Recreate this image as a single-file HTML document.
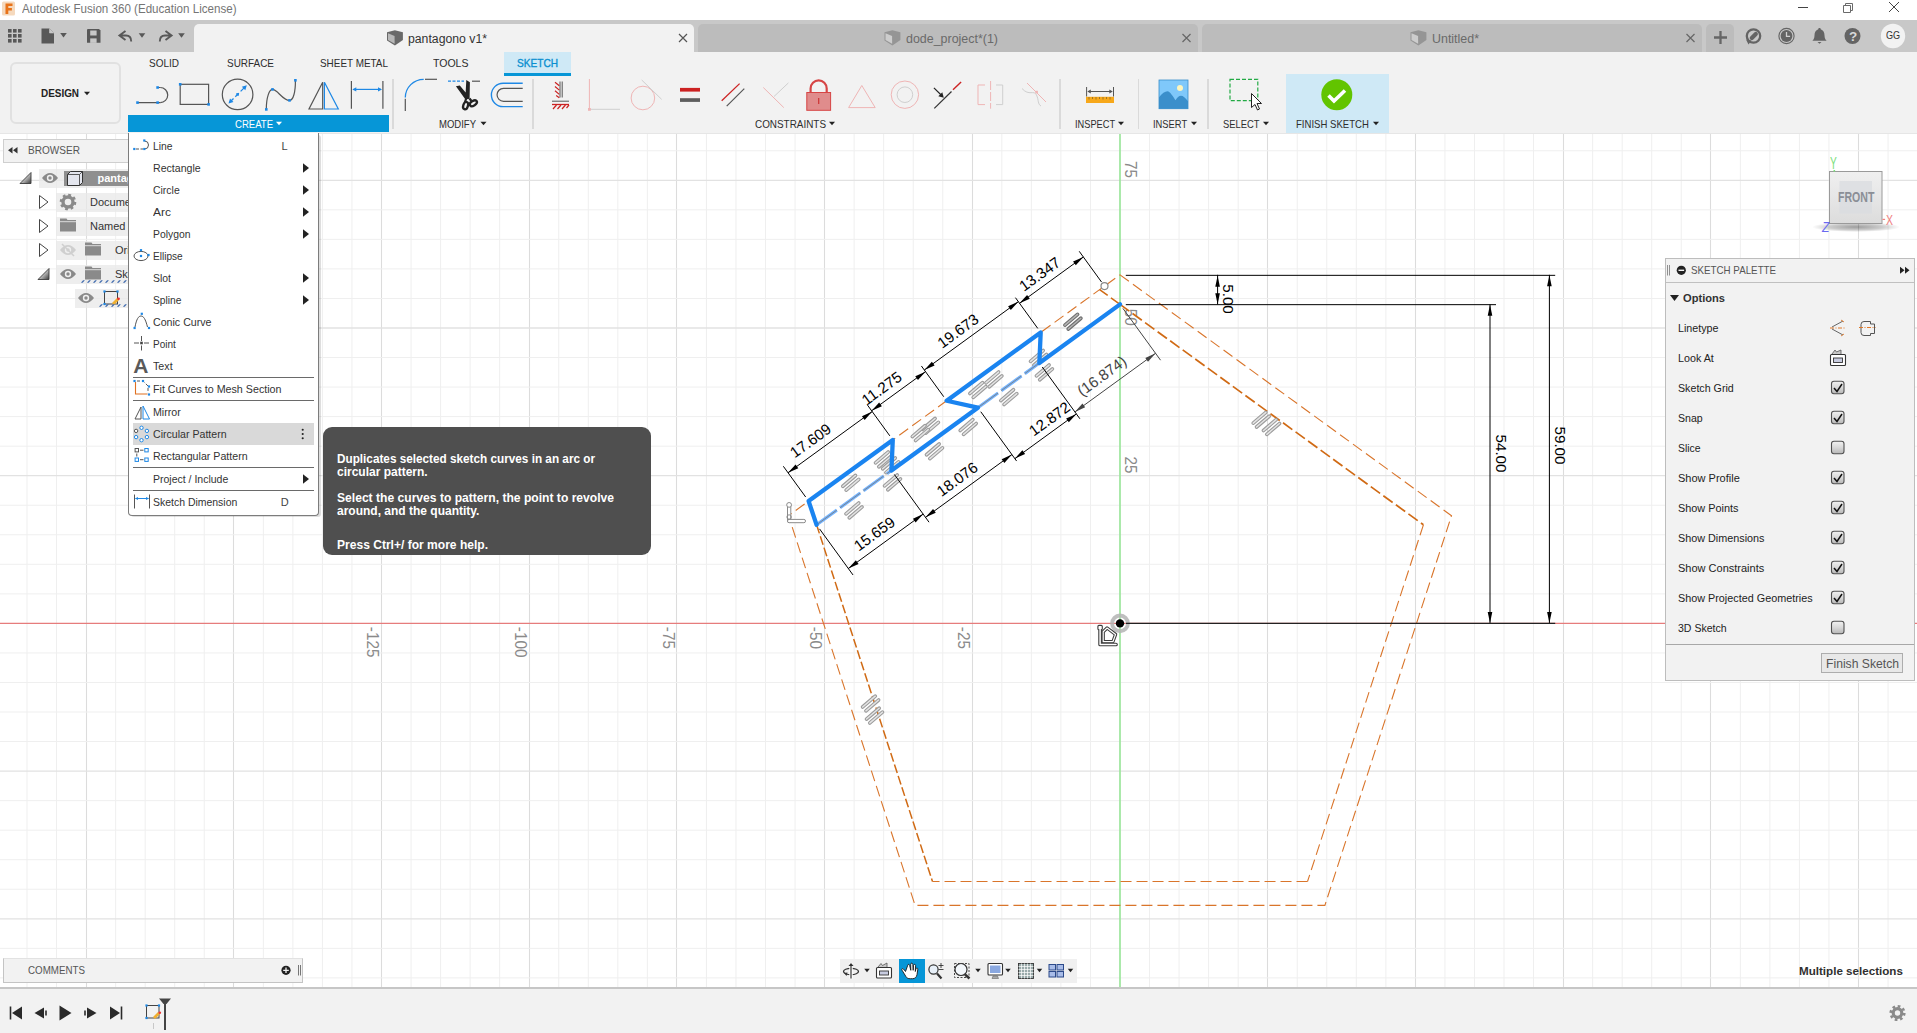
<!DOCTYPE html>
<html lang="en"><head><meta charset="utf-8"><title>Autodesk Fusion 360 (Education License)</title>
<style>
html,body{margin:0;padding:0}
body{width:1917px;height:1033px;position:relative;overflow:hidden;background:#fff;font-family:"Liberation Sans",sans-serif}
.b{position:absolute;display:block}
.t{position:absolute;white-space:nowrap;line-height:1;font-family:"Liberation Sans",sans-serif}
</style></head>
<body>
<!-- canvas -->
<svg class="b" style="left:0;top:0" width="1917" height="1033" viewBox="0 0 1917 1033" font-family="Liberation Sans, sans-serif"><rect x="0" y="133" width="1917" height="855" fill="#fff"/><line x1="27.02" y1="133.00" x2="27.02" y2="988.00" stroke="#efefef" stroke-width="1" /><line x1="56.56" y1="133.00" x2="56.56" y2="988.00" stroke="#efefef" stroke-width="1" /><line x1="86.50" y1="133.00" x2="86.50" y2="988.00" stroke="#dcdcdc" stroke-width="1.1" /><line x1="115.64" y1="133.00" x2="115.64" y2="988.00" stroke="#efefef" stroke-width="1" /><line x1="145.18" y1="133.00" x2="145.18" y2="988.00" stroke="#efefef" stroke-width="1" /><line x1="174.72" y1="133.00" x2="174.72" y2="988.00" stroke="#efefef" stroke-width="1" /><line x1="204.26" y1="133.00" x2="204.26" y2="988.00" stroke="#efefef" stroke-width="1" /><line x1="233.50" y1="133.00" x2="233.50" y2="988.00" stroke="#dcdcdc" stroke-width="1.1" /><line x1="263.34" y1="133.00" x2="263.34" y2="988.00" stroke="#efefef" stroke-width="1" /><line x1="292.88" y1="133.00" x2="292.88" y2="988.00" stroke="#efefef" stroke-width="1" /><line x1="322.42" y1="133.00" x2="322.42" y2="988.00" stroke="#efefef" stroke-width="1" /><line x1="351.96" y1="133.00" x2="351.96" y2="988.00" stroke="#efefef" stroke-width="1" /><line x1="381.50" y1="133.00" x2="381.50" y2="988.00" stroke="#dcdcdc" stroke-width="1.1" /><line x1="411.04" y1="133.00" x2="411.04" y2="988.00" stroke="#efefef" stroke-width="1" /><line x1="440.58" y1="133.00" x2="440.58" y2="988.00" stroke="#efefef" stroke-width="1" /><line x1="470.12" y1="133.00" x2="470.12" y2="988.00" stroke="#efefef" stroke-width="1" /><line x1="499.66" y1="133.00" x2="499.66" y2="988.00" stroke="#efefef" stroke-width="1" /><line x1="529.50" y1="133.00" x2="529.50" y2="988.00" stroke="#dcdcdc" stroke-width="1.1" /><line x1="558.74" y1="133.00" x2="558.74" y2="988.00" stroke="#efefef" stroke-width="1" /><line x1="588.28" y1="133.00" x2="588.28" y2="988.00" stroke="#efefef" stroke-width="1" /><line x1="617.82" y1="133.00" x2="617.82" y2="988.00" stroke="#efefef" stroke-width="1" /><line x1="647.36" y1="133.00" x2="647.36" y2="988.00" stroke="#efefef" stroke-width="1" /><line x1="676.50" y1="133.00" x2="676.50" y2="988.00" stroke="#dcdcdc" stroke-width="1.1" /><line x1="706.44" y1="133.00" x2="706.44" y2="988.00" stroke="#efefef" stroke-width="1" /><line x1="735.98" y1="133.00" x2="735.98" y2="988.00" stroke="#efefef" stroke-width="1" /><line x1="765.52" y1="133.00" x2="765.52" y2="988.00" stroke="#efefef" stroke-width="1" /><line x1="795.06" y1="133.00" x2="795.06" y2="988.00" stroke="#efefef" stroke-width="1" /><line x1="824.50" y1="133.00" x2="824.50" y2="988.00" stroke="#dcdcdc" stroke-width="1.1" /><line x1="854.14" y1="133.00" x2="854.14" y2="988.00" stroke="#efefef" stroke-width="1" /><line x1="883.68" y1="133.00" x2="883.68" y2="988.00" stroke="#efefef" stroke-width="1" /><line x1="913.22" y1="133.00" x2="913.22" y2="988.00" stroke="#efefef" stroke-width="1" /><line x1="942.76" y1="133.00" x2="942.76" y2="988.00" stroke="#efefef" stroke-width="1" /><line x1="972.50" y1="133.00" x2="972.50" y2="988.00" stroke="#dcdcdc" stroke-width="1.1" /><line x1="1001.84" y1="133.00" x2="1001.84" y2="988.00" stroke="#efefef" stroke-width="1" /><line x1="1031.38" y1="133.00" x2="1031.38" y2="988.00" stroke="#efefef" stroke-width="1" /><line x1="1060.92" y1="133.00" x2="1060.92" y2="988.00" stroke="#efefef" stroke-width="1" /><line x1="1090.46" y1="133.00" x2="1090.46" y2="988.00" stroke="#efefef" stroke-width="1" /><line x1="1149.54" y1="133.00" x2="1149.54" y2="988.00" stroke="#efefef" stroke-width="1" /><line x1="1179.08" y1="133.00" x2="1179.08" y2="988.00" stroke="#efefef" stroke-width="1" /><line x1="1208.62" y1="133.00" x2="1208.62" y2="988.00" stroke="#efefef" stroke-width="1" /><line x1="1238.16" y1="133.00" x2="1238.16" y2="988.00" stroke="#efefef" stroke-width="1" /><line x1="1267.50" y1="133.00" x2="1267.50" y2="988.00" stroke="#dcdcdc" stroke-width="1.1" /><line x1="1297.24" y1="133.00" x2="1297.24" y2="988.00" stroke="#efefef" stroke-width="1" /><line x1="1326.78" y1="133.00" x2="1326.78" y2="988.00" stroke="#efefef" stroke-width="1" /><line x1="1356.32" y1="133.00" x2="1356.32" y2="988.00" stroke="#efefef" stroke-width="1" /><line x1="1385.86" y1="133.00" x2="1385.86" y2="988.00" stroke="#efefef" stroke-width="1" /><line x1="1415.50" y1="133.00" x2="1415.50" y2="988.00" stroke="#dcdcdc" stroke-width="1.1" /><line x1="1444.94" y1="133.00" x2="1444.94" y2="988.00" stroke="#efefef" stroke-width="1" /><line x1="1474.48" y1="133.00" x2="1474.48" y2="988.00" stroke="#efefef" stroke-width="1" /><line x1="1504.02" y1="133.00" x2="1504.02" y2="988.00" stroke="#efefef" stroke-width="1" /><line x1="1533.56" y1="133.00" x2="1533.56" y2="988.00" stroke="#efefef" stroke-width="1" /><line x1="1563.50" y1="133.00" x2="1563.50" y2="988.00" stroke="#dcdcdc" stroke-width="1.1" /><line x1="1592.64" y1="133.00" x2="1592.64" y2="988.00" stroke="#efefef" stroke-width="1" /><line x1="1622.18" y1="133.00" x2="1622.18" y2="988.00" stroke="#efefef" stroke-width="1" /><line x1="1651.72" y1="133.00" x2="1651.72" y2="988.00" stroke="#efefef" stroke-width="1" /><line x1="1681.26" y1="133.00" x2="1681.26" y2="988.00" stroke="#efefef" stroke-width="1" /><line x1="1710.50" y1="133.00" x2="1710.50" y2="988.00" stroke="#dcdcdc" stroke-width="1.1" /><line x1="1740.34" y1="133.00" x2="1740.34" y2="988.00" stroke="#efefef" stroke-width="1" /><line x1="1769.88" y1="133.00" x2="1769.88" y2="988.00" stroke="#efefef" stroke-width="1" /><line x1="1799.42" y1="133.00" x2="1799.42" y2="988.00" stroke="#efefef" stroke-width="1" /><line x1="1828.96" y1="133.00" x2="1828.96" y2="988.00" stroke="#efefef" stroke-width="1" /><line x1="1858.50" y1="133.00" x2="1858.50" y2="988.00" stroke="#dcdcdc" stroke-width="1.1" /><line x1="1888.04" y1="133.00" x2="1888.04" y2="988.00" stroke="#efefef" stroke-width="1" /><line x1="0.00" y1="150.76" x2="1917.00" y2="150.76" stroke="#efefef" stroke-width="1" /><line x1="0.00" y1="180.30" x2="1917.00" y2="180.30" stroke="#e2e2e2" stroke-width="1.3" /><line x1="0.00" y1="209.84" x2="1917.00" y2="209.84" stroke="#efefef" stroke-width="1" /><line x1="0.00" y1="239.38" x2="1917.00" y2="239.38" stroke="#efefef" stroke-width="1" /><line x1="0.00" y1="268.92" x2="1917.00" y2="268.92" stroke="#efefef" stroke-width="1" /><line x1="0.00" y1="298.46" x2="1917.00" y2="298.46" stroke="#efefef" stroke-width="1" /><line x1="0.00" y1="328.00" x2="1917.00" y2="328.00" stroke="#e2e2e2" stroke-width="1.3" /><line x1="0.00" y1="357.54" x2="1917.00" y2="357.54" stroke="#efefef" stroke-width="1" /><line x1="0.00" y1="387.08" x2="1917.00" y2="387.08" stroke="#efefef" stroke-width="1" /><line x1="0.00" y1="416.62" x2="1917.00" y2="416.62" stroke="#efefef" stroke-width="1" /><line x1="0.00" y1="446.16" x2="1917.00" y2="446.16" stroke="#efefef" stroke-width="1" /><line x1="0.00" y1="475.70" x2="1917.00" y2="475.70" stroke="#e2e2e2" stroke-width="1.3" /><line x1="0.00" y1="505.24" x2="1917.00" y2="505.24" stroke="#efefef" stroke-width="1" /><line x1="0.00" y1="534.78" x2="1917.00" y2="534.78" stroke="#efefef" stroke-width="1" /><line x1="0.00" y1="564.32" x2="1917.00" y2="564.32" stroke="#efefef" stroke-width="1" /><line x1="0.00" y1="593.86" x2="1917.00" y2="593.86" stroke="#efefef" stroke-width="1" /><line x1="0.00" y1="652.94" x2="1917.00" y2="652.94" stroke="#efefef" stroke-width="1" /><line x1="0.00" y1="682.48" x2="1917.00" y2="682.48" stroke="#efefef" stroke-width="1" /><line x1="0.00" y1="712.02" x2="1917.00" y2="712.02" stroke="#efefef" stroke-width="1" /><line x1="0.00" y1="741.56" x2="1917.00" y2="741.56" stroke="#efefef" stroke-width="1" /><line x1="0.00" y1="771.10" x2="1917.00" y2="771.10" stroke="#e2e2e2" stroke-width="1.3" /><line x1="0.00" y1="800.64" x2="1917.00" y2="800.64" stroke="#efefef" stroke-width="1" /><line x1="0.00" y1="830.18" x2="1917.00" y2="830.18" stroke="#efefef" stroke-width="1" /><line x1="0.00" y1="859.72" x2="1917.00" y2="859.72" stroke="#efefef" stroke-width="1" /><line x1="0.00" y1="889.26" x2="1917.00" y2="889.26" stroke="#efefef" stroke-width="1" /><line x1="0.00" y1="918.80" x2="1917.00" y2="918.80" stroke="#e2e2e2" stroke-width="1.3" /><line x1="0.00" y1="948.34" x2="1917.00" y2="948.34" stroke="#efefef" stroke-width="1" /><line x1="0.00" y1="977.88" x2="1917.00" y2="977.88" stroke="#efefef" stroke-width="1" /><line x1="0.00" y1="623.40" x2="1917.00" y2="623.40" stroke="#e67c7c" stroke-width="1.2" /><line x1="1120.00" y1="133.00" x2="1120.00" y2="988.00" stroke="#9ce69c" stroke-width="1.7" /><text transform="translate(367.20 626.80) rotate(90) scale(0.9 1)" font-size="17" fill="#8a8a8a">-125</text><text transform="translate(514.90 626.80) rotate(90) scale(0.9 1)" font-size="17" fill="#8a8a8a">-100</text><text transform="translate(662.60 626.80) rotate(90) scale(0.9 1)" font-size="17" fill="#8a8a8a">-75</text><text transform="translate(810.30 626.80) rotate(90) scale(0.9 1)" font-size="17" fill="#8a8a8a">-50</text><text transform="translate(958.00 626.80) rotate(90) scale(0.9 1)" font-size="17" fill="#8a8a8a">-25</text><text transform="translate(1124.60 456.48) rotate(90) scale(0.9 1)" font-size="17" fill="#8a8a8a">25</text><text transform="translate(1124.60 308.78) rotate(90) scale(0.9 1)" font-size="17" fill="#8a8a8a">50</text><text transform="translate(1124.60 161.08) rotate(90) scale(0.9 1)" font-size="17" fill="#8a8a8a">75</text><polygon points="1120.00,274.83 1451.51,515.69 1324.89,905.40 915.11,905.40 788.49,515.69" fill="none" stroke="#d9752b" stroke-width="1.1" stroke-dasharray="11 5"/><line x1="1120.00" y1="304.37" x2="1423.42" y2="524.81" stroke="#d06a14" stroke-width="1.7" stroke-dasharray="11.5 4"/><line x1="1423.42" y1="524.81" x2="1307.52" y2="881.50" stroke="#d9752b" stroke-width="1.1" stroke-dasharray="11 5"/><line x1="1307.52" y1="881.50" x2="932.48" y2="881.50" stroke="#d9752b" stroke-width="1.1" stroke-dasharray="11 5"/><line x1="816.58" y1="524.81" x2="932.48" y2="881.50" stroke="#d06a14" stroke-width="1.5" stroke-dasharray="9 3"/><line x1="1099.61" y1="289.55" x2="1120.00" y2="304.37" stroke="#d06a14" stroke-width="1.5" stroke-dasharray="10 4"/><line x1="1064.93" y1="325.15" x2="1077.56" y2="314.37" stroke="#6e6e6e" stroke-width="3.700" stroke-linecap="round"/><line x1="1064.93" y1="325.15" x2="1077.56" y2="314.37" stroke="#b4b4b4" stroke-width="1.500" stroke-linecap="round"/><line x1="1068.24" y1="329.03" x2="1080.87" y2="318.25" stroke="#6e6e6e" stroke-width="3.700" stroke-linecap="round"/><line x1="1068.24" y1="329.03" x2="1080.87" y2="318.25" stroke="#b4b4b4" stroke-width="1.500" stroke-linecap="round"/><line x1="1030.53" y1="361.35" x2="1043.16" y2="350.57" stroke="#9c9c9c" stroke-width="3.700" stroke-linecap="round"/><line x1="1030.53" y1="361.35" x2="1043.16" y2="350.57" stroke="#e4e4e4" stroke-width="1.500" stroke-linecap="round"/><line x1="1033.84" y1="365.23" x2="1046.47" y2="354.45" stroke="#9c9c9c" stroke-width="3.700" stroke-linecap="round"/><line x1="1033.84" y1="365.23" x2="1046.47" y2="354.45" stroke="#e4e4e4" stroke-width="1.500" stroke-linecap="round"/><line x1="1036.43" y1="375.85" x2="1049.06" y2="365.07" stroke="#9c9c9c" stroke-width="3.700" stroke-linecap="round"/><line x1="1036.43" y1="375.85" x2="1049.06" y2="365.07" stroke="#e4e4e4" stroke-width="1.500" stroke-linecap="round"/><line x1="1039.74" y1="379.73" x2="1052.37" y2="368.95" stroke="#9c9c9c" stroke-width="3.700" stroke-linecap="round"/><line x1="1039.74" y1="379.73" x2="1052.37" y2="368.95" stroke="#e4e4e4" stroke-width="1.500" stroke-linecap="round"/><line x1="985.93" y1="382.85" x2="998.56" y2="372.07" stroke="#9c9c9c" stroke-width="3.700" stroke-linecap="round"/><line x1="985.93" y1="382.85" x2="998.56" y2="372.07" stroke="#e4e4e4" stroke-width="1.500" stroke-linecap="round"/><line x1="989.24" y1="386.73" x2="1001.87" y2="375.95" stroke="#9c9c9c" stroke-width="3.700" stroke-linecap="round"/><line x1="989.24" y1="386.73" x2="1001.87" y2="375.95" stroke="#e4e4e4" stroke-width="1.500" stroke-linecap="round"/><line x1="969.93" y1="393.45" x2="982.56" y2="382.67" stroke="#9c9c9c" stroke-width="3.700" stroke-linecap="round"/><line x1="969.93" y1="393.45" x2="982.56" y2="382.67" stroke="#e4e4e4" stroke-width="1.500" stroke-linecap="round"/><line x1="973.24" y1="397.33" x2="985.87" y2="386.55" stroke="#9c9c9c" stroke-width="3.700" stroke-linecap="round"/><line x1="973.24" y1="397.33" x2="985.87" y2="386.55" stroke="#e4e4e4" stroke-width="1.500" stroke-linecap="round"/><line x1="1000.83" y1="400.55" x2="1013.46" y2="389.77" stroke="#9c9c9c" stroke-width="3.700" stroke-linecap="round"/><line x1="1000.83" y1="400.55" x2="1013.46" y2="389.77" stroke="#e4e4e4" stroke-width="1.500" stroke-linecap="round"/><line x1="1004.14" y1="404.43" x2="1016.77" y2="393.65" stroke="#9c9c9c" stroke-width="3.700" stroke-linecap="round"/><line x1="1004.14" y1="404.43" x2="1016.77" y2="393.65" stroke="#e4e4e4" stroke-width="1.500" stroke-linecap="round"/><line x1="960.23" y1="430.45" x2="972.86" y2="419.67" stroke="#9c9c9c" stroke-width="3.700" stroke-linecap="round"/><line x1="960.23" y1="430.45" x2="972.86" y2="419.67" stroke="#e4e4e4" stroke-width="1.500" stroke-linecap="round"/><line x1="963.54" y1="434.33" x2="976.17" y2="423.55" stroke="#9c9c9c" stroke-width="3.700" stroke-linecap="round"/><line x1="963.54" y1="434.33" x2="976.17" y2="423.55" stroke="#e4e4e4" stroke-width="1.500" stroke-linecap="round"/><line x1="922.43" y1="429.25" x2="935.06" y2="418.47" stroke="#9c9c9c" stroke-width="3.700" stroke-linecap="round"/><line x1="922.43" y1="429.25" x2="935.06" y2="418.47" stroke="#e4e4e4" stroke-width="1.500" stroke-linecap="round"/><line x1="925.74" y1="433.13" x2="938.37" y2="422.35" stroke="#9c9c9c" stroke-width="3.700" stroke-linecap="round"/><line x1="925.74" y1="433.13" x2="938.37" y2="422.35" stroke="#e4e4e4" stroke-width="1.500" stroke-linecap="round"/><line x1="912.33" y1="436.55" x2="924.96" y2="425.77" stroke="#9c9c9c" stroke-width="3.700" stroke-linecap="round"/><line x1="912.33" y1="436.55" x2="924.96" y2="425.77" stroke="#e4e4e4" stroke-width="1.500" stroke-linecap="round"/><line x1="915.64" y1="440.43" x2="928.27" y2="429.65" stroke="#9c9c9c" stroke-width="3.700" stroke-linecap="round"/><line x1="915.64" y1="440.43" x2="928.27" y2="429.65" stroke="#e4e4e4" stroke-width="1.500" stroke-linecap="round"/><line x1="926.53" y1="454.75" x2="939.16" y2="443.97" stroke="#9c9c9c" stroke-width="3.700" stroke-linecap="round"/><line x1="926.53" y1="454.75" x2="939.16" y2="443.97" stroke="#e4e4e4" stroke-width="1.500" stroke-linecap="round"/><line x1="929.84" y1="458.63" x2="942.47" y2="447.85" stroke="#9c9c9c" stroke-width="3.700" stroke-linecap="round"/><line x1="929.84" y1="458.63" x2="942.47" y2="447.85" stroke="#e4e4e4" stroke-width="1.500" stroke-linecap="round"/><line x1="875.53" y1="462.85" x2="888.16" y2="452.07" stroke="#9c9c9c" stroke-width="3.700" stroke-linecap="round"/><line x1="875.53" y1="462.85" x2="888.16" y2="452.07" stroke="#e4e4e4" stroke-width="1.500" stroke-linecap="round"/><line x1="878.84" y1="466.73" x2="891.47" y2="455.95" stroke="#9c9c9c" stroke-width="3.700" stroke-linecap="round"/><line x1="878.84" y1="466.73" x2="891.47" y2="455.95" stroke="#e4e4e4" stroke-width="1.500" stroke-linecap="round"/><line x1="882.63" y1="468.75" x2="895.26" y2="457.97" stroke="#9c9c9c" stroke-width="3.700" stroke-linecap="round"/><line x1="882.63" y1="468.75" x2="895.26" y2="457.97" stroke="#e4e4e4" stroke-width="1.500" stroke-linecap="round"/><line x1="885.94" y1="472.63" x2="898.57" y2="461.85" stroke="#9c9c9c" stroke-width="3.700" stroke-linecap="round"/><line x1="885.94" y1="472.63" x2="898.57" y2="461.85" stroke="#e4e4e4" stroke-width="1.500" stroke-linecap="round"/><line x1="884.53" y1="485.85" x2="897.16" y2="475.07" stroke="#9c9c9c" stroke-width="3.700" stroke-linecap="round"/><line x1="884.53" y1="485.85" x2="897.16" y2="475.07" stroke="#e4e4e4" stroke-width="1.500" stroke-linecap="round"/><line x1="887.84" y1="489.73" x2="900.47" y2="478.95" stroke="#9c9c9c" stroke-width="3.700" stroke-linecap="round"/><line x1="887.84" y1="489.73" x2="900.47" y2="478.95" stroke="#e4e4e4" stroke-width="1.500" stroke-linecap="round"/><line x1="842.83" y1="486.25" x2="855.46" y2="475.47" stroke="#9c9c9c" stroke-width="3.700" stroke-linecap="round"/><line x1="842.83" y1="486.25" x2="855.46" y2="475.47" stroke="#e4e4e4" stroke-width="1.500" stroke-linecap="round"/><line x1="846.14" y1="490.13" x2="858.77" y2="479.35" stroke="#9c9c9c" stroke-width="3.700" stroke-linecap="round"/><line x1="846.14" y1="490.13" x2="858.77" y2="479.35" stroke="#e4e4e4" stroke-width="1.500" stroke-linecap="round"/><line x1="846.03" y1="513.85" x2="858.66" y2="503.07" stroke="#9c9c9c" stroke-width="3.700" stroke-linecap="round"/><line x1="846.03" y1="513.85" x2="858.66" y2="503.07" stroke="#e4e4e4" stroke-width="1.500" stroke-linecap="round"/><line x1="849.34" y1="517.73" x2="861.97" y2="506.95" stroke="#9c9c9c" stroke-width="3.700" stroke-linecap="round"/><line x1="849.34" y1="517.73" x2="861.97" y2="506.95" stroke="#e4e4e4" stroke-width="1.500" stroke-linecap="round"/><line x1="862.63" y1="706.95" x2="875.26" y2="696.17" stroke="#9c9c9c" stroke-width="3.700" stroke-linecap="round"/><line x1="862.63" y1="706.95" x2="875.26" y2="696.17" stroke="#e4e4e4" stroke-width="1.500" stroke-linecap="round"/><line x1="865.94" y1="710.83" x2="878.57" y2="700.05" stroke="#9c9c9c" stroke-width="3.700" stroke-linecap="round"/><line x1="865.94" y1="710.83" x2="878.57" y2="700.05" stroke="#e4e4e4" stroke-width="1.500" stroke-linecap="round"/><line x1="866.53" y1="719.05" x2="879.16" y2="708.27" stroke="#9c9c9c" stroke-width="3.700" stroke-linecap="round"/><line x1="866.53" y1="719.05" x2="879.16" y2="708.27" stroke="#e4e4e4" stroke-width="1.500" stroke-linecap="round"/><line x1="869.84" y1="722.93" x2="882.47" y2="712.15" stroke="#9c9c9c" stroke-width="3.700" stroke-linecap="round"/><line x1="869.84" y1="722.93" x2="882.47" y2="712.15" stroke="#e4e4e4" stroke-width="1.500" stroke-linecap="round"/><line x1="1253.23" y1="423.15" x2="1265.86" y2="412.37" stroke="#9c9c9c" stroke-width="3.700" stroke-linecap="round"/><line x1="1253.23" y1="423.15" x2="1265.86" y2="412.37" stroke="#e4e4e4" stroke-width="1.500" stroke-linecap="round"/><line x1="1256.54" y1="427.03" x2="1269.17" y2="416.25" stroke="#9c9c9c" stroke-width="3.700" stroke-linecap="round"/><line x1="1256.54" y1="427.03" x2="1269.17" y2="416.25" stroke="#e4e4e4" stroke-width="1.500" stroke-linecap="round"/><line x1="1263.53" y1="430.45" x2="1276.16" y2="419.67" stroke="#9c9c9c" stroke-width="3.700" stroke-linecap="round"/><line x1="1263.53" y1="430.45" x2="1276.16" y2="419.67" stroke="#e4e4e4" stroke-width="1.500" stroke-linecap="round"/><line x1="1266.84" y1="434.33" x2="1279.47" y2="423.55" stroke="#9c9c9c" stroke-width="3.700" stroke-linecap="round"/><line x1="1266.84" y1="434.33" x2="1279.47" y2="423.55" stroke="#e4e4e4" stroke-width="1.500" stroke-linecap="round"/><line x1="816.58" y1="524.81" x2="891.43" y2="470.44" stroke="#74b4ff" stroke-width="3.2" stroke-dasharray="25 4"/><line x1="977.82" y1="407.67" x2="1039.35" y2="362.97" stroke="#74b4ff" stroke-width="3.2" stroke-dasharray="25 4"/><line x1="816.58" y1="524.81" x2="891.43" y2="470.44" stroke="#7a8490" stroke-width="1" stroke-dasharray="25 4"/><line x1="977.82" y1="407.67" x2="1039.35" y2="362.97" stroke="#7a8490" stroke-width="1" stroke-dasharray="25 4"/><polyline points="1120.00,304.37 1039.35,362.97 1040.70,332.44 946.67,400.76 977.82,407.67 891.43,470.44 892.78,439.91 808.62,501.06 816.58,524.81" fill="none" stroke="#1a84f0" stroke-width="4.300" stroke-linejoin="round" stroke-linecap="round"/><circle cx="1104.50" cy="286.09" r="3.500" fill="#fff" stroke="#8a8a8a" stroke-width="1.200"/><line x1="1101.56" y1="282.05" x2="1079.22" y2="251.30" stroke="#000" stroke-width="1" /><line x1="1037.76" y1="328.40" x2="1015.43" y2="297.65" stroke="#000" stroke-width="1" /><line x1="943.73" y1="396.71" x2="921.40" y2="365.97" stroke="#000" stroke-width="1" /><line x1="889.84" y1="435.87" x2="867.51" y2="405.12" stroke="#000" stroke-width="1" /><line x1="805.68" y1="497.02" x2="783.34" y2="466.27" stroke="#000" stroke-width="1" /><line x1="1083.34" y1="256.97" x2="1019.54" y2="303.32" stroke="#000" stroke-width="1" /><path d="M1083.34 256.97L1075.79 265.29L1073.09 261.57z" fill="#000"/><path d="M1019.54 303.32L1027.09 294.99L1029.79 298.71z" fill="#000"/><text transform="translate(1042.76 278.41) rotate(-36)" text-anchor="middle" font-size="15.2" fill="#000">13.347</text><line x1="1018.37" y1="301.70" x2="924.34" y2="370.02" stroke="#000" stroke-width="1" /><path d="M1018.37 301.70L1010.82 310.02L1008.12 306.30z" fill="#000"/><path d="M924.34 370.02L931.88 361.69L934.59 365.41z" fill="#000"/><text transform="translate(961.06 335.30) rotate(-36)" text-anchor="middle" font-size="15.2" fill="#000">19.673</text><line x1="925.51" y1="371.63" x2="871.62" y2="410.79" stroke="#000" stroke-width="1" /><path d="M925.51 371.63L917.96 379.96L915.26 376.24z" fill="#000"/><path d="M871.62 410.79L879.17 402.46L881.87 406.18z" fill="#000"/><text transform="translate(884.74 392.60) rotate(-36)" text-anchor="middle" font-size="15.2" fill="#000">11.275</text><line x1="872.21" y1="411.60" x2="788.04" y2="472.75" stroke="#000" stroke-width="1" /><path d="M872.21 411.60L864.66 419.92L861.96 416.20z" fill="#000"/><path d="M788.04 472.75L795.59 464.42L798.29 468.14z" fill="#000"/><text transform="translate(813.58 444.92) rotate(-36)" text-anchor="middle" font-size="15.2" fill="#000">17.609</text><line x1="1122.94" y1="308.41" x2="1160.56" y2="360.19" stroke="#444" stroke-width="1" /><line x1="1042.29" y1="367.01" x2="1079.90" y2="418.79" stroke="#000" stroke-width="1" /><line x1="980.76" y1="411.71" x2="1016.62" y2="461.06" stroke="#000" stroke-width="1" /><line x1="894.37" y1="474.48" x2="929.04" y2="522.21" stroke="#000" stroke-width="1" /><line x1="819.52" y1="528.86" x2="853.02" y2="574.97" stroke="#000" stroke-width="1" /><line x1="1155.56" y1="353.31" x2="1074.91" y2="411.91" stroke="#444" stroke-width="1" /><path d="M1155.56 353.31L1148.01 361.64L1145.31 357.92z" fill="#444"/><path d="M1074.91 411.91L1082.46 403.58L1085.16 407.31z" fill="#444"/><text transform="translate(1104.87 380.25) rotate(-36)" text-anchor="middle" font-size="15.2" fill="#444">(16.874)</text><line x1="1076.38" y1="413.93" x2="1014.85" y2="458.63" stroke="#000" stroke-width="1" /><path d="M1076.38 413.93L1068.83 422.26L1066.13 418.54z" fill="#000"/><path d="M1014.85 458.63L1022.40 450.31L1025.11 454.03z" fill="#000"/><text transform="translate(1052.64 423.15) rotate(-36)" text-anchor="middle" font-size="15.2" fill="#000">12.872</text><line x1="1011.92" y1="454.59" x2="925.52" y2="517.36" stroke="#000" stroke-width="1" /><path d="M1011.92 454.59L1004.37 462.91L1001.66 459.19z" fill="#000"/><path d="M925.52 517.36L933.07 509.03L935.77 512.75z" fill="#000"/><text transform="translate(960.23 483.48) rotate(-36)" text-anchor="middle" font-size="15.2" fill="#000">18.076</text><line x1="923.17" y1="514.12" x2="848.32" y2="568.50" stroke="#000" stroke-width="1" /><path d="M923.17 514.12L915.62 522.45L912.92 518.73z" fill="#000"/><path d="M848.32 568.50L855.87 560.17L858.57 563.90z" fill="#000"/><text transform="translate(877.45 538.07) rotate(-36)" text-anchor="middle" font-size="15.2" fill="#000">15.659</text><line x1="1125.80" y1="275.33" x2="1555.20" y2="275.33" stroke="#000" stroke-width="1" /><line x1="1125.80" y1="304.67" x2="1496.00" y2="304.67" stroke="#000" stroke-width="1" /><line x1="1490.00" y1="304.37" x2="1490.00" y2="623.40" stroke="#000" stroke-width="1" /><path d="M1490.00 304.87L1492.30 315.87L1487.70 315.87z" fill="#000"/><path d="M1490.00 622.90L1487.70 611.90L1492.30 611.90z" fill="#000"/><text transform="translate(1496.00 453.50) rotate(90)" text-anchor="middle" font-size="15.200">54.00</text><line x1="1549.40" y1="274.83" x2="1549.40" y2="623.40" stroke="#000" stroke-width="1" /><path d="M1549.40 275.33L1551.70 286.33L1547.10 286.33z" fill="#000"/><path d="M1549.40 622.90L1547.10 611.90L1551.70 611.90z" fill="#000"/><text transform="translate(1555.40 445.50) rotate(90)" text-anchor="middle" font-size="15.200">59.00</text><line x1="1217.60" y1="274.83" x2="1217.60" y2="304.37" stroke="#000" stroke-width="1" /><path d="M1217.60 275.63L1219.90 286.63L1215.30 286.63z" fill="#000"/><path d="M1217.60 304.17L1215.30 293.17L1219.90 293.17z" fill="#000"/><text transform="translate(1223 299) rotate(90)" text-anchor="middle" font-size="15.200">5.00</text><circle cx="1120.00" cy="623.40" r="7.900" fill="none" stroke="#b4b4b4" stroke-width="3.900" opacity="0.850"/><circle cx="1120.00" cy="623.40" r="4.200" fill="#000"/><line x1="1126.00" y1="623.40" x2="1555.20" y2="623.40" stroke="#222" stroke-width="1.4" /><g fill="none" stroke-linejoin="round" stroke-linecap="round"><path d="M1107.100 628l8.500 6.400-2.700 7.300h-9.700v-10z" stroke="#3c3c3c" stroke-width="3.300"/><path d="M1107.100 628l8.500 6.400-2.700 7.300h-9.700v-10z" stroke="#fff" stroke-width="1.200"/><path d="M1100.100 627.600V644.500H1116" stroke="#3c3c3c" stroke-width="3.700"/><rect x="1097.900" y="625.400" width="4.400" height="4.400" rx="1" fill="#fff" stroke="#3c3c3c" stroke-width="1.100"/><path d="M1100.100 627.600V644.500H1116" stroke="#fff" stroke-width="1.500"/></g><g fill="#fff" stroke="#8a8a8a" stroke-width="1"><rect x="787.500" y="505" width="3.300" height="17.500" rx="1.600"/><rect x="787.500" y="519.400" width="18" height="3.300" rx="1.600"/><circle cx="789.100" cy="504.900" r="2.400"/><circle cx="789.100" cy="517" r="2.200" fill="none"/></g></svg>
<!-- top -->
<div class="b" style="left:0px;top:0px;width:1917px;height:20px;background:#ffffff;"></div>
<span class="t" style="left:22.00px;top:2.03px;font-size:13px;color:#757575;transform:scaleX(0.8914);transform-origin:0 50%;">Autodesk Fusion 360 (Education License)</span>
<div class="b" style="left:0px;top:20px;width:1917px;height:32px;background:#c8c8c8;"></div>
<div class="b" style="left:194px;top:24px;width:500.3px;height:28px;background:#f2f2f2;border-radius:5px 5px 0 0;"></div>
<div class="b" style="left:698px;top:24px;width:500px;height:28px;background:#bcbcbc;border-radius:5px 5px 0 0;"></div>
<div class="b" style="left:1202px;top:24px;width:500px;height:28px;background:#bcbcbc;border-radius:5px 5px 0 0;"></div>
<div class="b" style="left:1706px;top:24px;width:28px;height:28px;background:#bcbcbc;border-radius:5px 5px 0 0;"></div>
<span class="t" style="left:408.00px;top:32.77px;font-size:12.5px;color:#333;transform:scaleX(0.9798);transform-origin:0 50%;">pantagono v1*</span>
<span class="t" style="left:905.50px;top:32.77px;font-size:12.5px;color:#6a6a6a;transform:scaleX(0.9955);transform-origin:0 50%;">dode_project*(1)</span>
<span class="t" style="left:1432.00px;top:32.77px;font-size:12.5px;color:#6a6a6a;transform:scaleX(0.9948);transform-origin:0 50%;">Untitled*</span>
<div class="b" style="left:0px;top:52px;width:1917px;height:81px;background:#f2f2f2;"></div>
<div class="b" style="left:0px;top:132.6px;width:1917px;height:0.9px;background:#e6e6e6;"></div>
<div class="b" style="left:504px;top:52px;width:67px;height:24px;background:#cfe9f6;"></div>
<div class="b" style="left:504px;top:73px;width:67px;height:3.4px;background:#0696d7;"></div>
<span class="t" style="left:149.00px;top:57.61px;font-size:11px;color:#2d2d2d;transform:scaleX(0.9088);transform-origin:0 50%;">SOLID</span>
<span class="t" style="left:227.00px;top:57.61px;font-size:11px;color:#2d2d2d;transform:scaleX(0.9046);transform-origin:0 50%;">SURFACE</span>
<span class="t" style="left:320.00px;top:57.61px;font-size:11px;color:#2d2d2d;transform:scaleX(0.9020);transform-origin:0 50%;">SHEET METAL</span>
<span class="t" style="left:433.00px;top:57.61px;font-size:11px;color:#2d2d2d;transform:scaleX(0.9572);transform-origin:0 50%;">TOOLS</span>
<span class="t" style="left:517.00px;top:57.61px;font-size:11px;color:#0a8fd0;transform:scaleX(0.9189);transform-origin:0 50%;-webkit-text-stroke:0.35px #0a8fd0;">SKETCH</span>
<div class="b" style="left:10.3px;top:62.3px;width:110.3px;height:61.3px;background:#f2f2f2;border:2px solid #e1e1e1;border-radius:6px;box-sizing:border-box;"></div>
<span class="t" style="left:41.00px;top:87.61px;font-size:11px;color:#222;transform:scaleX(0.9010);transform-origin:0 50%;font-weight:700;">DESIGN</span>
<div class="b" style="left:128px;top:115px;width:261px;height:17.4px;background:#0696d7;"></div>
<span class="t" style="left:234.70px;top:119.11px;font-size:11px;color:#fff;transform:scaleX(0.8698);transform-origin:0 50%;">CREATE</span>
<span class="t" style="left:438.50px;top:119.11px;font-size:11px;color:#2d2d2d;transform:scaleX(0.8650);transform-origin:0 50%;">MODIFY</span>
<span class="t" style="left:754.70px;top:119.11px;font-size:11px;color:#2d2d2d;transform:scaleX(0.9006);transform-origin:0 50%;">CONSTRAINTS</span>
<span class="t" style="left:1074.50px;top:119.11px;font-size:11px;color:#2d2d2d;transform:scaleX(0.8411);transform-origin:0 50%;">INSPECT</span>
<span class="t" style="left:1153.20px;top:119.11px;font-size:11px;color:#2d2d2d;transform:scaleX(0.8495);transform-origin:0 50%;">INSERT</span>
<span class="t" style="left:1222.50px;top:119.11px;font-size:11px;color:#2d2d2d;transform:scaleX(0.8530);transform-origin:0 50%;">SELECT</span>
<div class="b" style="left:1286px;top:74px;width:103px;height:59px;background:#cfe9f6;"></div>
<span class="t" style="left:1296.40px;top:119.11px;font-size:11px;color:#2d2d2d;transform:scaleX(0.8694);transform-origin:0 50%;">FINISH SKETCH</span>
<div class="b" style="left:392.2px;top:79px;width:1.7px;height:50px;background:#dadada;"></div>
<div class="b" style="left:531.9px;top:79px;width:1.7px;height:50px;background:#dadada;"></div>
<div class="b" style="left:1058.9px;top:79px;width:1.7px;height:50px;background:#dadada;"></div>
<div class="b" style="left:1137.7px;top:79px;width:1.7px;height:50px;background:#dadada;"></div>
<div class="b" style="left:1206.9px;top:79px;width:1.7px;height:50px;background:#dadada;"></div>
<svg class="b" style="left:0px;top:0px;" width="1917" height="140" viewBox="0 0 1917 140"><rect x="2" y="1.5" width="13" height="14" rx="1.5" fill="#f5d9bd"/><path d="M5.5 3.5h7v2.6h-4.2v2h3.6v2.4h-3.6v3.5h-2.8z" fill="#e8731a"/><path d="M1798 7.5h10" stroke="#444" stroke-width="1" fill="none"/><path d="M1843.500 5.500h7v7h-7z M1845.500 5.500v-2h7v7h-2" stroke="#6a6a6a" stroke-width="1" fill="none"/><path d="M1889 2l10 10M1899 2l-10 10" stroke="#444" stroke-width="1" fill="none"/><rect x="8" y="29" width="3.6" height="3.6" fill="#585858"/><rect x="8" y="34" width="3.6" height="3.6" fill="#585858"/><rect x="8" y="39" width="3.6" height="3.6" fill="#585858"/><rect x="13" y="29" width="3.6" height="3.6" fill="#585858"/><rect x="13" y="34" width="3.6" height="3.6" fill="#585858"/><rect x="13" y="39" width="3.6" height="3.6" fill="#585858"/><rect x="18" y="29" width="3.6" height="3.6" fill="#585858"/><rect x="18" y="34" width="3.6" height="3.6" fill="#585858"/><rect x="18" y="39" width="3.6" height="3.6" fill="#585858"/><path d="M41.5 28.5h8l4.5 4.5v10.5h-12.5z" fill="#585858"/><path d="M49.5 28.5v4.5h4.5" fill="#c8c8c8" stroke="#c8c8c8" stroke-width="0.6"/><path d="M60.2 33 h6.6 l-3.3 4.6 z" fill="#585858"/><path d="M87.500 29h11.500l1.500 1.500v12.300h-13.500v-13.300z" fill="#585858"/><rect x="90.200" y="30.500" width="6.400" height="5" fill="#c8c8c8"/><rect x="90.200" y="38.400" width="6.400" height="4.500" fill="#c8c8c8"/><path d="M125.500 30.900l-6.100 4.600 6.100 4.500M119.800 35.500h6.200c4 0 5.200 2.500 5.200 5.900" stroke="#585858" stroke-width="1.900" fill="none"/><path d="M138.7 33.2 h6.6 l-3.3 4.6 z" fill="#585858"/><path d="M165.500 30.900l6.100 4.600-6.100 4.500M171.200 35.500h-6.200c-4 0-5.200 2.500-5.200 5.900" stroke="#585858" stroke-width="1.900" fill="none"/><path d="M178.2 33.2 h6.6 l-3.3 4.6 z" fill="#585858"/><path d="M387 32.3l7.900-2.100 8 2.100v7.700l-8 5.500-7.900-5.100z" fill="#696969"/><path d="M388 33.2l6.600 2.800v7.800l-6.600-3.800z" fill="#b8b8b8"/><path d="M884.5 32.3l7.900-2.100 8 2.100v7.700l-8 5.500-7.900-5.100z" fill="#959595"/><path d="M885.5 33.2l6.600 2.800v7.800l-6.600-3.800z" fill="#cdcdcd"/><path d="M1410.5 32.3l7.900-2.100 8 2.100v7.700l-8 5.500-7.900-5.100z" fill="#959595"/><path d="M1411.5 33.2l6.600 2.800v7.800l-6.600-3.800z" fill="#cdcdcd"/><path d="M679 34l8 8M687 34l-8 8" stroke="#555" stroke-width="1.2" fill="none"/><path d="M1182.5 34l8 8M1190.5 34l-8 8" stroke="#666" stroke-width="1.2" fill="none"/><path d="M1686.5 34l8 8M1694.5 34l-8 8" stroke="#666" stroke-width="1.2" fill="none"/><path d="M1714 37.500h13M1720.500 31v13" stroke="#666" stroke-width="2.300" fill="none"/><circle cx="1753.500" cy="36" r="6.700" fill="none" stroke="#646464" stroke-width="2.300"/><path d="M1751.800 38l4-4" stroke="#646464" stroke-width="4.200" stroke-linecap="round"/><path d="M1746 39.500l5.500 1-3 4z" fill="#646464"/><path d="M1752.500 43.700a7.800 7.800 0 0 0 8.500-5.500" stroke="#c8c8c8" stroke-width="0" fill="none"/><circle cx="1786.500" cy="36" r="7.600" fill="none" stroke="#646464" stroke-width="1.100"/><circle cx="1786.500" cy="36" r="5.900" fill="#646464"/><path d="M1786.500 32v4.300h3.600" stroke="#d0d0d0" stroke-width="1.300" fill="none"/><path d="M1819.500 28c-.8 0-1.200.5-1.200 1.200-2.600.8-3.800 3.300-3.800 6 0 3-1 4.500-2.200 5.500h14.400c-1.200-1-2.200-2.500-2.200-5.500 0-2.700-1.200-5.200-3.800-6 0-.7-.4-1.200-1.200-1.200z" fill="#646464"/><path d="M1817.500 42h4l-2 1.800z" fill="#646464"/><circle cx="1852.500" cy="36" r="8" fill="#646464"/><circle cx="1893" cy="36" r="12.200" fill="#f2f2f2"/><path d="M137.500 102.600h22.700M157.600 87.500h2.600" stroke="#555" stroke-width="1.200" fill="none"/><path d="M160.200 102.600a7.550 7.550 0 0 0 0-15.100" stroke="#555" stroke-width="1.200" fill="none"/><rect x="136.2" y="101.3" width="2.6" height="2.6" fill="#1e88e5"/><rect x="156.3" y="101.3" width="2.6" height="2.6" fill="#1e88e5"/><rect x="156.3" y="86.2" width="2.6" height="2.6" fill="#1e88e5"/><rect x="180.200" y="84.300" width="28.400" height="20.100" fill="none" stroke="#555" stroke-width="1.200"/><rect x="178.9" y="83" width="2.6" height="2.6" fill="#1e88e5"/><rect x="207.3" y="103.1" width="2.6" height="2.6" fill="#1e88e5"/><circle cx="237.600" cy="94.400" r="15.300" fill="none" stroke="#555" stroke-width="1.200"/><path d="M230 102l15.500-15.500" stroke="#1e88e5" stroke-width="1.300" stroke-dasharray="5 2.500"/><path d="M228.500 103.500l1.500-5 3.500 3.500z M246.800 85.200l-1.500 5-3.500-3.500z" fill="#1e88e5"/><rect x="236.3" y="93.1" width="2.6" height="2.6" fill="#1e88e5"/><path d="M266.300 109.400c0-12 3-20 6.200-20 5 0 10 11 17 11 4 0 6-9 5.900-20" stroke="#555" stroke-width="1.200" fill="none"/><rect x="265" y="108.1" width="2.6" height="2.6" fill="#1e88e5"/><rect x="271.2" y="88.1" width="2.6" height="2.6" fill="#1e88e5"/><rect x="288.2" y="99.1" width="2.6" height="2.6" fill="#1e88e5"/><rect x="294.1" y="79" width="2.6" height="2.6" fill="#1e88e5"/><path d="M309 109h13.700v-26.800z" stroke="#555" stroke-width="1.200" fill="none"/><path d="M324.400 82.200v26.800h13.900z" stroke="#1e88e5" stroke-width="1.200" fill="none"/><path d="M351.400 81v27.700M382.900 81v27.700" stroke="#555" stroke-width="1.200" fill="none"/><path d="M353.500 89.400h27.500" stroke="#1e88e5" stroke-width="1.200"/><path d="M352.300 89.400l4-2.200v4.400z M382 89.400l-4-2.200v4.400z" fill="#1e88e5"/><path d="M276 121.7 h6 l-3 3.6 z" fill="#fff"/><path d="M405.300 98.700v12.200" stroke="#555" stroke-width="1.200"/><path d="M405.300 97.500a18.400 18.400 0 0 1 18.400-18.200" stroke="#1e88e5" stroke-width="1.300" fill="none"/><path d="M425 79.300h12" stroke="#555" stroke-width="1.200"/><path d="M448 81.200h16" stroke="#1e88e5" stroke-width="1.200" stroke-dasharray="3 1.500"/><path d="M472 81.200h8" stroke="#555" stroke-width="1.200"/><path d="M455.900 86.300l3.900-.9 9.800 11.900-3.600 2.900z M466.300 80l3.600 2.200-.3 16.500-4.300.8z" fill="#222"/><ellipse cx="465.600" cy="105.600" rx="2.300" ry="3.800" transform="rotate(18 465.600 105.600)" fill="none" stroke="#222" stroke-width="2.300"/><ellipse cx="473.400" cy="103.300" rx="2.300" ry="3.900" transform="rotate(58 473.400 103.300)" fill="none" stroke="#222" stroke-width="2.300"/><path d="M466 99l-1 3M469.500 98.500l2 2.500" stroke="#222" stroke-width="2.200"/><path d="M522.700 83.200h-19.600a11.700 11.700 0 0 0 0 23.400h19.600" stroke="#1e88e5" stroke-width="1.400" fill="none"/><path d="M522.700 88.400h-19.200a6.450 6.450 0 0 0 0 12.900h19.200" stroke="#555" stroke-width="1.200" fill="none"/><path d="M480.5 121.7 h6 l-3 3.6 z" fill="#222"/><path d="M560 81.500v16M562.200 81.500v16" stroke="#555" stroke-width="1" /><path d="M555 82.200l4.300 3.600M555 86.500l4.300 3.600M555 90.800l4.300 3.600M556.200 95.500l3.100 2.300" stroke="#cc2222" stroke-width="1.200"/><path d="M552 101.200h17" stroke="#555" stroke-width="1"/><path d="M552 104.500h17" stroke="#cc2222" stroke-width="1.300"/><path d="M553 109l3.500-4M557.500 109l3.500-4M562 109l3.500-4M566.500 108l2.500-3" stroke="#cc2222" stroke-width="1.200"/><path d="M589.400 79v30" stroke="#efb5b5" stroke-width="1"/><path d="M590 109.300h30" stroke="#cfcfcf" stroke-width="1"/><rect x="588" y="108" width="2.800" height="2.800" fill="#efb5b5"/><circle cx="642.900" cy="98" r="11.800" fill="none" stroke="#efb5b5" stroke-width="1"/><path d="M641.700 80l20 19.400" stroke="#cfcfcf" stroke-width="1"/><rect x="680" y="87.900" width="20" height="3.700" fill="#cc2222"/><rect x="680" y="98.200" width="20" height="3.700" fill="#5e5e5e"/><path d="M721.700 100.800l17.900-17.200" stroke="#cc2222" stroke-width="1.300"/><path d="M726.700 106.100l17.600-17.500" stroke="#555" stroke-width="1.200"/><path d="M763.300 87.500l20.500 20.100" stroke="#efb5b5" stroke-width="1"/><path d="M774 96.500l14.400-13.600" stroke="#cfcfcf" stroke-width="1"/><path d="M810.600 92.500v-4a8 8 0 0 1 16.100 0v4" fill="none" stroke="#d64545" stroke-width="2.200"/><rect x="806.800" y="92.500" width="23.800" height="17.800" fill="#e08c8c" stroke="#d64545" stroke-width="1"/><path d="M818.700 98v6" stroke="#c33" stroke-width="1.200"/><path d="M861.800 85.500l-13.200 22.100h26.600z" fill="none" stroke="#efb5b5" stroke-width="1"/><circle cx="904.900" cy="94.700" r="13.700" fill="none" stroke="#efb5b5" stroke-width="1"/><circle cx="904.900" cy="94.700" r="7.800" fill="none" stroke="#cfcfcf" stroke-width="1"/><path d="M934.300 108.400l17.200-16.900" stroke="#333" stroke-width="1.200"/><path d="M953 89.800l8.100-7.900" stroke="#cc2222" stroke-width="1.400"/><path d="M933.900 87.900l7 6.900" stroke="#222" stroke-width="1.200"/><path d="M943.800 97.700l-5.500-1.500 4-4z" fill="#222"/><path d="M985 85h-7v19.600h7" fill="none" stroke="#efb5b5" stroke-width="1"/><path d="M996 85h6.700v19.600h-6.700" fill="none" stroke="#cfcfcf" stroke-width="1"/><path d="M990.600 81v27.700" stroke="#efb5b5" stroke-width="1" stroke-dasharray="9 2"/><path d="M1027 83l19 19" stroke="#efb5b5" stroke-width="1"/><path d="M1022 88.500c7 8 12 1 14.500 6.500s1 9 4.500 11" fill="none" stroke="#cfcfcf" stroke-width="1"/><rect x="1035.300" y="90.800" width="2.600" height="2.600" fill="#efb5b5"/><path d="M829 121.7 h6 l-3 3.6 z" fill="#222"/><rect x="1086" y="96.800" width="28" height="6.200" fill="#f7a81b"/><path d="M1089 97v2.500M1092.500 97v2M1096 97v2.500M1099.500 97v2M1103 97v2.500M1106.500 97v2M1110 97v2.500" stroke="#8a6a20" stroke-width="0.800"/><path d="M1086.600 87v9.500M1113.500 87v9.500" stroke="#555" stroke-width="1"/><path d="M1088.500 91.500h23" stroke="#555" stroke-width="1"/><path d="M1087.300 91.500l3.500-2v4z M1112.800 91.500l-3.500-2v4z" fill="#555"/><path d="M1118 121.7 h6 l-3 3.6 z" fill="#222"/><rect x="1159" y="80" width="29" height="28.700" fill="#7fc8fa"/><path d="M1159 108.700v-11.500c3-4 6-6 8.500-6s6 6 8 9c1.500-2.500 3.500-4.500 5.500-4.500s4.500 2 7 5.500v7.500z" fill="#3b8fcb"/><circle cx="1180" cy="88" r="3" fill="#fdf5bd"/><rect x="1159" y="80" width="29" height="28.700" fill="none" stroke="#3b8fcb" stroke-width="0.800"/><path d="M1191 121.7 h6 l-3 3.6 z" fill="#222"/><rect x="1230" y="79.400" width="27.800" height="21.200" fill="none" stroke="#22aa44" stroke-width="1.200" stroke-dasharray="4 2"/><path d="M1251.500 93.500v14l3.500-3 2.500 5.500 2-1-2.500-5.500h4.500z" fill="#fff" stroke="#222" stroke-width="1"/><path d="M1263 121.7 h6 l-3 3.6 z" fill="#222"/><circle cx="1336.800" cy="94.800" r="15.500" fill="#62c400"/><path d="M1328.500 95.500l5.500 5.500 11-10.500" stroke="#fff" stroke-width="3.600" fill="none"/><path d="M1373 121.7 h6 l-3 3.6 z" fill="#222"/><path d="M84 91.7 h6 l-3 3.6 z" fill="#222"/></svg><span class="t" style="left:1885.90px;top:31.40px;font-size:10px;color:#333;transform:scaleX(0.91);transform-origin:0 50%;">GG</span><span class="t" style="left:1848.90px;top:29.68px;font-size:13.5px;color:#d8d8d8;font-weight:700;">?</span>
<!-- right -->
<svg class="b" style="left:0px;top:0px;" width="1917" height="240" viewBox="0 0 1917 240"><defs><radialGradient id="sh" cx="0.5" cy="0.5" r="0.5"><stop offset="0" stop-color="#000" stop-opacity="0.38"/><stop offset="0.6" stop-color="#000" stop-opacity="0.200"/><stop offset="1" stop-color="#000" stop-opacity="0"/></radialGradient><linearGradient id="cg" x1="0" y1="0" x2="0" y2="1"><stop offset="0" stop-color="#f0f0f0"/><stop offset="1" stop-color="#dcdcdc"/></linearGradient></defs><ellipse cx="1856" cy="227" rx="44" ry="5" fill="url(#sh)"/><rect x="1829.500" y="171.500" width="52.500" height="52" fill="url(#cg)" stroke="#9a9a9a" stroke-width="1"/><rect x="1839.500" y="181" width="32.500" height="32.500" fill="#d9dbe0" opacity="0.700"/><path d="M1882.500 219.400h2.600" stroke="#f08080" stroke-width="1.200"/><path d="M1834.300 170v1.600" stroke="#7be07b" stroke-width="1.600"/></svg>
<span class="t" style="left:1837.50px;top:191.56px;font-size:11.5px;color:#8a8e96;font-weight:700;transform:scale(0.92,1.3);transform-origin:0 50%;">FRONT</span>
<span class="t" style="left:1830.40px;top:155.37px;font-size:17px;color:#7be07b;transform:scaleX(0.6);transform-origin:0 50%;">Y</span>
<span class="t" style="left:1886.40px;top:211.95px;font-size:15px;color:#f08080;transform:scaleX(0.7);transform-origin:0 50%;">X</span>
<span class="t" style="left:1822.20px;top:218.81px;font-size:15.5px;color:#6a6af0;font-style:italic;transform:scaleX(0.78);transform-origin:0 50%;">Z</span>
<div class="b" style="left:1664.8px;top:258px;width:249.9px;height:422.8px;background:#f2f2f2;border:1px solid #bdbdbd;box-sizing:border-box;"></div>
<div class="b" style="left:1665.5px;top:282px;width:248.5px;height:1.2px;background:#c0c0c0;"></div>
<div class="b" style="left:1665.5px;top:644px;width:248.5px;height:1.3px;background:#a8a8a8;"></div>
<span class="t" style="left:1690.50px;top:264.91px;font-size:11px;color:#555;transform:scaleX(0.8886);transform-origin:0 50%;">SKETCH PALETTE</span>
<span class="t" style="left:1683.00px;top:293.37px;font-size:11.5px;color:#333;transform:scaleX(0.9668);transform-origin:0 50%;font-weight:700;">Options</span>
<span class="t" style="left:1678.00px;top:322.91px;font-size:11px;color:#222;transform:scaleX(0.9739);transform-origin:0 50%;">Linetype</span>
<span class="t" style="left:1678.00px;top:352.91px;font-size:11px;color:#222;transform:scaleX(0.9756);transform-origin:0 50%;">Look At</span>
<span class="t" style="left:1678.00px;top:382.91px;font-size:11px;color:#222;transform:scaleX(0.9710);transform-origin:0 50%;">Sketch Grid</span>
<span class="t" style="left:1678.00px;top:412.91px;font-size:11px;color:#222;transform:scaleX(0.9615);transform-origin:0 50%;">Snap</span>
<span class="t" style="left:1678.00px;top:442.91px;font-size:11px;color:#222;transform:scaleX(0.9479);transform-origin:0 50%;">Slice</span>
<span class="t" style="left:1678.00px;top:472.91px;font-size:11px;color:#222;">Show Profile</span>
<span class="t" style="left:1678.00px;top:502.91px;font-size:11px;color:#222;transform:scaleX(0.9895);transform-origin:0 50%;">Show Points</span>
<span class="t" style="left:1678.00px;top:532.91px;font-size:11px;color:#222;transform:scaleX(0.9826);transform-origin:0 50%;">Show Dimensions</span>
<span class="t" style="left:1678.00px;top:562.91px;font-size:11px;color:#222;">Show Constraints</span>
<span class="t" style="left:1678.00px;top:592.91px;font-size:11px;color:#222;transform:scaleX(0.9829);transform-origin:0 50%;">Show Projected Geometries</span>
<span class="t" style="left:1678.00px;top:622.91px;font-size:11px;color:#222;transform:scaleX(0.9577);transform-origin:0 50%;">3D Sketch</span>
<div class="b" style="left:1821px;top:652.8px;width:82px;height:20.2px;background:#e8e8e8;border:1px solid #adadad;box-sizing:border-box;"></div>
<span class="t" style="left:1825.50px;top:656.93px;font-size:13px;color:#555;transform:scaleX(0.9355);transform-origin:0 50%;">Finish Sketch</span>
<svg class="b" style="left:0px;top:0px;" width="1917" height="690" viewBox="0 0 1917 690"><defs><linearGradient id="cb" x1="0" y1="0" x2="0" y2="1"><stop offset="0" stop-color="#f2f2f2"/><stop offset="0.5" stop-color="#d8d8d8"/><stop offset="1" stop-color="#b6b6b6"/></linearGradient></defs><path d="M1667.500 265v10.500M1669.500 265v10.500" stroke="#666" stroke-width="0.700"/><circle cx="1681.300" cy="270.300" r="4.600" fill="#222"/><path d="M1678.500 270.300h5.600" stroke="#f2f2f2" stroke-width="1.400"/><path d="M1900 266.800l4.500 3.500-4.500 3.500zM1905 266.800l4.500 3.500-4.500 3.500z" fill="#222"/><path d="M1670 295h9l-4.500 6z" fill="#222"/><rect x="1831.500" y="381.3" width="12.500" height="12.500" rx="2.500" fill="url(#cb)" stroke="#505050" stroke-width="1.100"/><path d="M1834 388l3 3.500 5-7.500" fill="none" stroke="#111" stroke-width="1.500"/><rect x="1831.500" y="411.3" width="12.500" height="12.500" rx="2.500" fill="url(#cb)" stroke="#505050" stroke-width="1.100"/><path d="M1834 418l3 3.500 5-7.500" fill="none" stroke="#111" stroke-width="1.500"/><rect x="1831.500" y="441.3" width="12.500" height="12.500" rx="2.500" fill="url(#cb)" stroke="#505050" stroke-width="1.100"/><rect x="1831.500" y="471.3" width="12.500" height="12.500" rx="2.500" fill="url(#cb)" stroke="#505050" stroke-width="1.100"/><path d="M1834 478l3 3.500 5-7.500" fill="none" stroke="#111" stroke-width="1.500"/><rect x="1831.500" y="501.3" width="12.500" height="12.500" rx="2.500" fill="url(#cb)" stroke="#505050" stroke-width="1.100"/><path d="M1834 508l3 3.500 5-7.500" fill="none" stroke="#111" stroke-width="1.500"/><rect x="1831.500" y="531.3" width="12.500" height="12.500" rx="2.500" fill="url(#cb)" stroke="#505050" stroke-width="1.100"/><path d="M1834 538l3 3.500 5-7.500" fill="none" stroke="#111" stroke-width="1.500"/><rect x="1831.500" y="561.3" width="12.500" height="12.500" rx="2.500" fill="url(#cb)" stroke="#505050" stroke-width="1.100"/><path d="M1834 568l3 3.500 5-7.500" fill="none" stroke="#111" stroke-width="1.500"/><rect x="1831.500" y="591.3" width="12.500" height="12.500" rx="2.500" fill="url(#cb)" stroke="#505050" stroke-width="1.100"/><path d="M1834 598l3 3.500 5-7.500" fill="none" stroke="#111" stroke-width="1.500"/><rect x="1831.500" y="621.3" width="12.500" height="12.500" rx="2.500" fill="url(#cb)" stroke="#505050" stroke-width="1.100"/><path d="M1830 328h16" stroke="#e07828" stroke-width="1" stroke-dasharray="4 1.500 1 1.500"/><path d="M1832 327l11-6M1832 329l11 6" stroke="#555" stroke-width="0.900"/><path d="M1841 320l3 2M1841 336l3-2" stroke="#e07828" stroke-width="0.900"/><path d="M1864 321.500h6.500v2.500h4v9.500h-4v2h-6.500q-3 0-3-3v-8q0-3 3-3z" fill="none" stroke="#555" stroke-width="1"/><path d="M1859 327.500h16.500" stroke="#e07828" stroke-width="1" stroke-dasharray="4 1.500 1 1.500"/><path d="M1859 327.500h16.500" stroke="#f2f2f2" stroke-width="0"/><rect x="1830.500" y="354.500" width="15" height="11" rx="1" fill="#fff" stroke="#333" stroke-width="1.100"/><rect x="1833.500" y="358" width="9" height="4.500" fill="#c8cce0" stroke="#333" stroke-width="0.900"/><path d="M1832 354l3-4 1.500 2 4.500-2v4" fill="#c8c8c8" stroke="#555" stroke-width="0.800"/></svg>
<!-- bottom -->
<div class="b" style="left:0px;top:987px;width:1917px;height:2.2px;background:#c6c6c6;"></div>
<div class="b" style="left:0px;top:989px;width:1917px;height:44px;background:#f2f2f2;"></div>
<div class="b" style="left:3px;top:958px;width:300px;height:24.5px;background:#f2f2f2;border:1px solid #c4c4c4;box-sizing:border-box;border-top-color:#e2e2e2"></div>
<span class="t" style="left:28.00px;top:964.91px;font-size:11px;color:#555;transform:scaleX(0.8884);transform-origin:0 50%;">COMMENTS</span>
<div class="b" style="left:840px;top:959px;width:237px;height:24px;background:#f0f0f0;"></div>
<div class="b" style="left:899px;top:959px;width:26px;height:24px;background:#0696d7;"></div>
<span class="t" style="left:1798.50px;top:965.97px;font-size:11.5px;color:#303030;transform:scaleX(1.0099);transform-origin:0 50%;font-weight:700;">Multiple selections</span>
<svg class="b" style="left:0px;top:0px;pointer-events:none;" width="1917" height="1033" viewBox="0 0 1917 1033"><circle cx="286" cy="970.300" r="4.600" fill="#222"/><path d="M283.200 970.300h5.600M286 967.500v5.600" stroke="#f2f2f2" stroke-width="1.300"/><path d="M298.500 965v10.500M300.500 965v10.500" stroke="#555" stroke-width="0.800"/><ellipse cx="851" cy="971.500" rx="7.500" ry="3.200" fill="none" stroke="#333" stroke-width="1.300"/><path d="M851 963v15.500" stroke="#fff" stroke-width="3.400"/><path d="M851 964v14.500" stroke="#333" stroke-width="1.200"/><path d="M848.500 966l2.500-3 2.500 3z" fill="#333"/><path d="M844 973l3.500-.5-1 3.500z" fill="#333"/><path d="M864.25 968.8 h5.5 l-2.75 3.4 z" fill="#222"/><rect x="876.500" y="967.500" width="15" height="10.500" rx="1" fill="#fff" stroke="#333" stroke-width="1.100"/><rect x="879.500" y="971" width="9" height="4" fill="#c8cce0" stroke="#333" stroke-width="0.900"/><path d="M878 967l3-3.500 1.500 2 4.500-2.500v4" fill="#c8c8c8" stroke="#555" stroke-width="0.800"/><path d="M905.500 971.500l-2-2.500c-1-1-2.200 0-1.500 1.200l4 6.500c1 1.500 2 2 4.500 2h2c2.500 0 4-1.500 4.500-4l.8-5.500c.2-1.400-1.600-1.700-1.900-.3l-.6 2.600.3-6c0-1.500-2-1.500-2.100 0l-.3 4.800-.4-6c-.1-1.500-2.100-1.500-2.100 0l.1 6-1.200-5c-.4-1.500-2.300-1-2 .4z" fill="#fff" stroke="#1a1a1a" stroke-width="0.900"/><circle cx="933.500" cy="969.500" r="4.600" fill="#e8f0f8" stroke="#333" stroke-width="1.200"/><path d="M937 973.500l4.500 5" stroke="#333" stroke-width="2.200"/><path d="M938.500 965.500h5M941 963v5M938.500 969.500h5" stroke="#333" stroke-width="0.900"/><rect x="954.500" y="963.500" width="14.500" height="14" fill="none" stroke="#333" stroke-width="0.900" stroke-dasharray="2 1.500"/><circle cx="961" cy="969.500" r="6" fill="#f4f8fc" stroke="#333" stroke-width="1.200"/><path d="M965 974.500l4.500 4" stroke="#333" stroke-width="2.400"/><path d="M975.25 968.8 h5.5 l-2.75 3.4 z" fill="#222"/><rect x="988" y="963.500" width="14.500" height="11.500" rx="1" fill="#fff" stroke="#333" stroke-width="1.100"/><rect x="990" y="965.500" width="10.500" height="7.500" fill="#8aa8e0"/><path d="M992 978.500h6.500l-1-2.500h-4.500z" fill="#aaa" stroke="#555" stroke-width="0.500"/><path d="M1005.25 968.8 h5.5 l-2.75 3.4 z" fill="#222"/><rect x="1018.500" y="963.500" width="15" height="15" fill="#9aa" stroke="#333" stroke-width="0.900"/><path d="M1021.5 963.500v15M1018.500 966.5h15" stroke="#fff" stroke-width="0.700"/><path d="M1024.5 963.500v15M1018.500 969.5h15" stroke="#fff" stroke-width="0.700"/><path d="M1027.5 963.500v15M1018.500 972.5h15" stroke="#fff" stroke-width="0.700"/><path d="M1030.5 963.500v15M1018.500 975.5h15" stroke="#fff" stroke-width="0.700"/><path d="M1036.75 968.8 h5.5 l-2.75 3.4 z" fill="#222"/><rect x="1049" y="964.5" width="6.500" height="5.500" fill="#a8bce8" stroke="#2c4a8a" stroke-width="1"/><rect x="1057" y="964.5" width="6.500" height="5.500" fill="#a8bce8" stroke="#2c4a8a" stroke-width="1"/><rect x="1049" y="971.5" width="6.500" height="5.500" fill="#a8bce8" stroke="#2c4a8a" stroke-width="1"/><rect x="1057" y="971.5" width="6.500" height="5.500" fill="#a8bce8" stroke="#2c4a8a" stroke-width="1"/><path d="M1067.75 968.8 h5.5 l-2.75 3.4 z" fill="#222"/><path d="M10.500 1006.500v13" stroke="#2a2a2a" stroke-width="1.600"/><path d="M22 1006.500v13l-10-6.500z" fill="#2a2a2a"/><path d="M44 1007.500v11l-9.500-5.500z" fill="#2a2a2a"/><path d="M46 1010.500v5" stroke="#2a2a2a" stroke-width="1.600"/><path d="M59.500 1005.500v15l12-7.500z" fill="#2a2a2a"/><path d="M87 1007.500v11l9.500-5.500z" fill="#2a2a2a"/><path d="M85 1010.500v5" stroke="#2a2a2a" stroke-width="1.600"/><path d="M110 1006.500v13l10-6.500z" fill="#2a2a2a"/><path d="M121.500 1006.500v13" stroke="#2a2a2a" stroke-width="1.600"/><rect x="146.500" y="1005.500" width="12.500" height="12.500" fill="none" stroke="#444" stroke-width="1"/><rect x="145.4" y="1004.4" width="2.200" height="2.200" fill="#1e88e5"/><rect x="157.9" y="1004.4" width="2.200" height="2.200" fill="#1e88e5"/><rect x="145.4" y="1016.9" width="2.200" height="2.200" fill="#1e88e5"/><path d="M153 1017l5-5 2 2-5 5z" fill="#f0b030"/><circle cx="159.800" cy="1012.800" r="1.300" fill="#e33"/><path d="M153.500 1023v6" stroke="#c8c8c8" stroke-width="1"/><path d="M159 998.500h12l-4.500 5.500h-3z" fill="#444"/><path d="M165 1002v28" stroke="#444" stroke-width="2"/><circle cx="1897.500" cy="1013" r="4.300" fill="none" stroke="#8a8a8a" stroke-width="3.200"/><circle cx="1897.500" cy="1013" r="6.800" fill="none" stroke="#8a8a8a" stroke-width="2.600" stroke-dasharray="2.670 2.670"/></svg>
<!-- left -->
<div class="b" style="left:3px;top:138.5px;width:130px;height:24px;background:#f2f2f2;border:1px solid #cfcfcf;box-sizing:border-box;"></div>
<span class="t" style="left:28.20px;top:144.91px;font-size:11px;color:#555;transform:scaleX(0.9131);transform-origin:0 50%;">BROWSER</span>
<div class="b" style="left:39px;top:168.5px;width:95px;height:19px;background:rgba(232,232,232,0.75);"></div>
<div class="b" style="left:64px;top:170.5px;width:70px;height:15px;background:#8f8f8f;"></div>
<div class="b" style="left:56px;top:192.5px;width:78px;height:19px;background:rgba(232,232,232,0.75);"></div>
<div class="b" style="left:56px;top:216.5px;width:78px;height:19px;background:rgba(232,232,232,0.75);"></div>
<div class="b" style="left:56px;top:240.5px;width:78px;height:19px;background:rgba(232,232,232,0.75);"></div>
<div class="b" style="left:56px;top:264.5px;width:78px;height:19px;background:rgba(232,232,232,0.75);"></div>
<div class="b" style="left:75px;top:288.5px;width:59px;height:19px;background:rgba(232,232,232,0.75);"></div>
<span class="t" style="left:97.50px;top:173.11px;font-size:11px;color:#fff;font-weight:700;">pantagono v1</span>
<span class="t" style="left:90.00px;top:196.91px;font-size:11px;color:#333;">Document Settings</span>
<span class="t" style="left:90.00px;top:220.91px;font-size:11px;color:#333;">Named Views</span>
<span class="t" style="left:115.00px;top:244.91px;font-size:11px;color:#333;">Origin</span>
<span class="t" style="left:115.00px;top:268.91px;font-size:11px;color:#333;">Sketches</span>
<svg class="b" style="left:0px;top:0px;" width="135" height="320" viewBox="0 0 135 320"><path d="M8 150.300l4.500-3.200v6.400zM13 150.300l4.500-3.200v6.400z" fill="#333"/><defs><linearGradient id="tg" x1="0.2" y1="0.2" x2="1" y2="1"><stop offset="0" stop-color="#f4f4f4"/><stop offset="0.45" stop-color="#b0b0b0"/><stop offset="1" stop-color="#3a3a3a"/></linearGradient></defs><path d="M31 172.500v11h-11z" fill="url(#tg)" stroke="#3c3c3c" stroke-width="0.900"/><path d="M49 268.500v11h-11z" fill="url(#tg)" stroke="#3c3c3c" stroke-width="0.900"/><path d="M39.500 195.5l8.500 6.500-8.500 6.500z" fill="#fff" stroke="#444" stroke-width="1"/><path d="M39.500 219.5l8.500 6.500-8.500 6.500z" fill="#fff" stroke="#444" stroke-width="1"/><path d="M39.500 243.5l8.500 6.500-8.500 6.500z" fill="#fff" stroke="#444" stroke-width="1"/><path d="M42 178q8-10 16 0q-8 10-16 0z" fill="#8a8a8a"/><circle cx="50" cy="178" r="3.2" fill="#f0f0f0"/><circle cx="50" cy="178" r="1.700" fill="#8a8a8a"/><path d="M67.500 174.500l3-3h12v11l-3 3h-12z" fill="#e4e6ee" stroke="#333" stroke-width="1"/><path d="M67.500 174.500h12v11M79.500 174.500l3-3" fill="none" stroke="#333" stroke-width="0.800"/><circle cx="68" cy="202" r="5" fill="none" stroke="#8a8a8a" stroke-width="3.400"/><circle cx="68" cy="202" r="7" fill="none" stroke="#8a8a8a" stroke-width="2.600" stroke-dasharray="2.750 2.750"/><path d="M60 218.5h6.500l1 1.500h8.500v11.500h-16z" fill="#8a8a8a"/><path d="M60 221.7h16" stroke="#f0f0f0" stroke-width="0.800"/><g opacity="0.300"><path d="M60 250q8-10 16 0q-8 10-16 0z" fill="#8a8a8a"/><circle cx="68" cy="250" r="3.2" fill="#f0f0f0"/><circle cx="68" cy="250" r="1.700" fill="#8a8a8a"/><path d="M62 244l12 12" stroke="#8a8a8a" stroke-width="1.500"/></g><path d="M85 242.5h6.500l1 1.500h8.500v11.500h-16z" fill="#8a8a8a"/><path d="M85 245.7h16" stroke="#f0f0f0" stroke-width="0.800"/><path d="M60 274q8-10 16 0q-8 10-16 0z" fill="#8a8a8a"/><circle cx="68" cy="274" r="3.2" fill="#f0f0f0"/><circle cx="68" cy="274" r="1.700" fill="#8a8a8a"/><path d="M85 266.5h6.500l1 1.500h8.500v11.500h-16z" fill="#8a8a8a"/><path d="M85 269.7h16" stroke="#f0f0f0" stroke-width="0.800"/><path d="M82 281.500h52" stroke="#456fb0" stroke-width="2.600" stroke-dasharray="1.800 4.200" transform="translate(0 281.500) skewX(-40) translate(0 -281.500)"/><path d="M78 298q8-10 16 0q-8 10-16 0z" fill="#8a8a8a"/><circle cx="86" cy="298" r="3.2" fill="#f0f0f0"/><circle cx="86" cy="298" r="1.700" fill="#8a8a8a"/><rect x="104.500" y="291.500" width="13" height="12.500" fill="none" stroke="#444" stroke-width="1"/><rect x="103.4" y="290.4" width="2.2" height="2.2" fill="#1e88e5"/><rect x="116.4" y="290.4" width="2.2" height="2.2" fill="#1e88e5"/><rect x="103.4" y="302.9" width="2.2" height="2.2" fill="#1e88e5"/><path d="M112 303l5-5 2 2-5 5z" fill="#f0b030"/><circle cx="118.500" cy="298.800" r="1.400" fill="#e33"/><path d="M100 305.500h34" stroke="#456fb0" stroke-width="2.600" stroke-dasharray="1.800 4.200" transform="translate(0 305.500) skewX(-40) translate(0 -305.500)"/></svg>
<div class="b" style="left:130.5px;top:135px;width:190.3px;height:382px;background:rgba(0,0,0,0.13);border-radius:3px;"></div>
<div class="b" style="left:128px;top:132.5px;width:190.8px;height:383px;background:#ffffff;border:1px solid #7c7c7c;border-top:none;border-radius:0 0 4px 4px;box-sizing:border-box;"></div>
<div class="b" style="left:133px;top:423px;width:181px;height:22px;background:#d9d9d9;"></div>
<div class="b" style="left:133px;top:376.7px;width:181px;height:1.3px;background:#6a6a6a;"></div>
<div class="b" style="left:133px;top:399.8px;width:181px;height:1.3px;background:#6a6a6a;"></div>
<div class="b" style="left:133px;top:467.1px;width:181px;height:1.3px;background:#6a6a6a;"></div>
<div class="b" style="left:133px;top:489.7px;width:181px;height:1.3px;background:#6a6a6a;"></div>
<span class="t" style="left:153.20px;top:140.91px;font-size:11px;color:#333;transform:scaleX(0.9377);transform-origin:0 50%;">Line</span>
<span class="t" style="left:153.20px;top:162.91px;font-size:11px;color:#333;transform:scaleX(0.9631);transform-origin:0 50%;">Rectangle</span>
<span class="t" style="left:153.20px;top:184.91px;font-size:11px;color:#333;transform:scaleX(0.9498);transform-origin:0 50%;">Circle</span>
<span class="t" style="left:153.20px;top:206.91px;font-size:11px;color:#333;transform:scaleX(1.0848);transform-origin:0 50%;">Arc</span>
<span class="t" style="left:153.20px;top:228.91px;font-size:11px;color:#333;transform:scaleX(0.9434);transform-origin:0 50%;">Polygon</span>
<span class="t" style="left:153.20px;top:250.91px;font-size:11px;color:#333;transform:scaleX(0.9166);transform-origin:0 50%;">Ellipse</span>
<span class="t" style="left:153.20px;top:272.91px;font-size:11px;color:#333;transform:scaleX(0.9444);transform-origin:0 50%;">Slot</span>
<span class="t" style="left:153.20px;top:294.91px;font-size:11px;color:#333;transform:scaleX(0.9321);transform-origin:0 50%;">Spline</span>
<span class="t" style="left:153.20px;top:316.91px;font-size:11px;color:#333;transform:scaleX(0.9666);transform-origin:0 50%;">Conic Curve</span>
<span class="t" style="left:153.20px;top:338.91px;font-size:11px;color:#333;transform:scaleX(0.9094);transform-origin:0 50%;">Point</span>
<span class="t" style="left:153.20px;top:360.91px;font-size:11px;color:#333;transform:scaleX(0.9716);transform-origin:0 50%;">Text</span>
<span class="t" style="left:153.20px;top:383.91px;font-size:11px;color:#333;transform:scaleX(0.9732);transform-origin:0 50%;">Fit Curves to Mesh Section</span>
<span class="t" style="left:153.20px;top:406.91px;font-size:11px;color:#333;transform:scaleX(0.9683);transform-origin:0 50%;">Mirror</span>
<span class="t" style="left:153.20px;top:428.91px;font-size:11px;color:#333;transform:scaleX(0.9632);transform-origin:0 50%;">Circular Pattern</span>
<span class="t" style="left:153.20px;top:450.91px;font-size:11px;color:#333;transform:scaleX(0.9670);transform-origin:0 50%;">Rectangular Pattern</span>
<span class="t" style="left:153.20px;top:473.91px;font-size:11px;color:#333;transform:scaleX(0.9547);transform-origin:0 50%;">Project / Include</span>
<span class="t" style="left:153.20px;top:496.91px;font-size:11px;color:#333;transform:scaleX(0.9510);transform-origin:0 50%;">Sketch Dimension</span>
<span class="t" style="left:281.50px;top:140.91px;font-size:11px;color:#444;">L</span>
<span class="t" style="left:280.80px;top:496.91px;font-size:11px;color:#444;">D</span>
<svg class="b" style="left:0px;top:0px;" width="330" height="520" viewBox="0 0 330 520"><path d="M303 163.2v9.600l6-4.800z" fill="#222"/><path d="M303 185.2v9.600l6-4.800z" fill="#222"/><path d="M303 207.2v9.600l6-4.800z" fill="#222"/><path d="M303 229.2v9.600l6-4.800z" fill="#222"/><path d="M303 273.2v9.600l6-4.800z" fill="#222"/><path d="M303 295.2v9.600l6-4.800z" fill="#222"/><path d="M303 474.2v9.600l6-4.800z" fill="#222"/><circle cx="302.700" cy="429.8" r="1.050" fill="#222"/><circle cx="302.700" cy="434" r="1.050" fill="#222"/><circle cx="302.700" cy="438.2" r="1.050" fill="#222"/><path d="M136 149h7" stroke="#555" stroke-width="1" stroke-dasharray="3 1.500"/><path d="M144.500 149a4 4 0 0 0 0-8" fill="none" stroke="#555" stroke-width="1"/><rect x="133.2" y="147.9" width="2.2" height="2.2" fill="#1e88e5"/><rect x="143.2" y="147.9" width="2.2" height="2.2" fill="#1e88e5"/><rect x="143.2" y="139.4" width="2.2" height="2.2" fill="#1e88e5"/><ellipse cx="141" cy="256" rx="7" ry="4.600" fill="none" stroke="#555" stroke-width="1"/><rect x="139.9" y="254.9" width="2.2" height="2.2" fill="#1e88e5"/><rect x="139.9" y="249.1" width="2.2" height="2.2" fill="#1e88e5"/><rect x="147.4" y="253.9" width="2.2" height="2.2" fill="#1e88e5"/><path d="M135 327c1.500-8 3.500-11 6-11s4.500 3 6.500 11" fill="none" stroke="#555" stroke-width="1"/><rect x="133.5" y="326.9" width="2.2" height="2.2" fill="#1e88e5"/><rect x="147.9" y="326.9" width="2.2" height="2.2" fill="#1e88e5"/><rect x="140.7" y="312.7" width="2.2" height="2.2" fill="#1e88e5"/><path d="M134 343h5M144 343h5M141.500 336v5M141.500 345.500v5" stroke="#555" stroke-width="1"/><rect x="140.200" y="341.700" width="2.600" height="2.600" fill="#444"/><path d="M135.500 382v12h12" fill="none" stroke="#e07020" stroke-width="1.100"/><path d="M137 381h6l5 5v7" fill="none" stroke="#555" stroke-width="1" stroke-dasharray="3 2"/><rect x="133.4" y="379.9" width="2.2" height="2.2" fill="#1e88e5"/><rect x="141.9" y="379.9" width="2.2" height="2.2" fill="#1e88e5"/><rect x="147.9" y="385.4" width="2.2" height="2.2" fill="#1e88e5"/><rect x="147.9" y="393.4" width="2.2" height="2.2" fill="#1e88e5"/><path d="M135 419h6v-12z" fill="none" stroke="#555" stroke-width="1"/><path d="M143 406v13h6.500z" fill="none" stroke="#1e88e5" stroke-width="1"/><circle cx="141.5" cy="427.8" r="1.700" fill="#fff" stroke="#1e88e5" stroke-width="1"/><circle cx="146.9" cy="430.9" r="1.700" fill="#fff" stroke="#1e88e5" stroke-width="1"/><circle cx="146.9" cy="437.1" r="1.700" fill="#fff" stroke="#1e88e5" stroke-width="1"/><circle cx="141.5" cy="440.2" r="1.700" fill="#fff" stroke="#1e88e5" stroke-width="1"/><circle cx="136.1" cy="437.1" r="1.700" fill="#fff" stroke="#1e88e5" stroke-width="1"/><circle cx="136.1" cy="430.9" r="1.700" fill="#fff" stroke="#555" stroke-width="1"/><rect x="135.1" y="448.5" width="3.400" height="3.400" fill="#fff" stroke="#555" stroke-width="1"/><rect x="144.8" y="448.5" width="3.400" height="3.400" fill="#fff" stroke="#1e88e5" stroke-width="1"/><rect x="135.1" y="458" width="3.400" height="3.400" fill="#fff" stroke="#1e88e5" stroke-width="1"/><rect x="144.8" y="458" width="3.400" height="3.400" fill="#fff" stroke="#1e88e5" stroke-width="1"/><path d="M140 450.200h3.500M140 459.700h3.500M136.800 453.500v3" stroke="#555" stroke-width="1"/><path d="M134.500 494.500v14M149.500 494.500v14" stroke="#555" stroke-width="1"/><path d="M135.500 498.500h13" stroke="#1e88e5" stroke-width="1"/><path d="M135 498.500l3-1.500v3zM149 498.500l-3-1.500v3z" fill="#1e88e5"/></svg>
<span class="t" style="left:133.30px;top:354.71px;font-size:21px;color:#5a5a5a;font-weight:700;">A</span>
<div class="b" style="left:323px;top:427px;width:328px;height:128px;background:#4f4f4f;border-radius:9px;"></div>
<span class="t" style="left:337.00px;top:452.62px;font-size:12px;color:#fff;transform:scaleX(0.9793);transform-origin:0 50%;font-weight:700;">Duplicates selected sketch curves in an arc or</span>
<span class="t" style="left:337.00px;top:465.62px;font-size:12px;color:#fff;font-weight:700;">circular pattern.</span>
<span class="t" style="left:337.00px;top:491.62px;font-size:12px;color:#fff;transform:scaleX(1.0083);transform-origin:0 50%;font-weight:700;">Select the curves to pattern, the point to revolve</span>
<span class="t" style="left:337.00px;top:504.62px;font-size:12px;color:#fff;font-weight:700;">around, and the quantity.</span>
<span class="t" style="left:337.00px;top:538.62px;font-size:12px;color:#fff;transform:scaleX(1.0041);transform-origin:0 50%;font-weight:700;">Press Ctrl+/ for more help.</span>
</body></html>
